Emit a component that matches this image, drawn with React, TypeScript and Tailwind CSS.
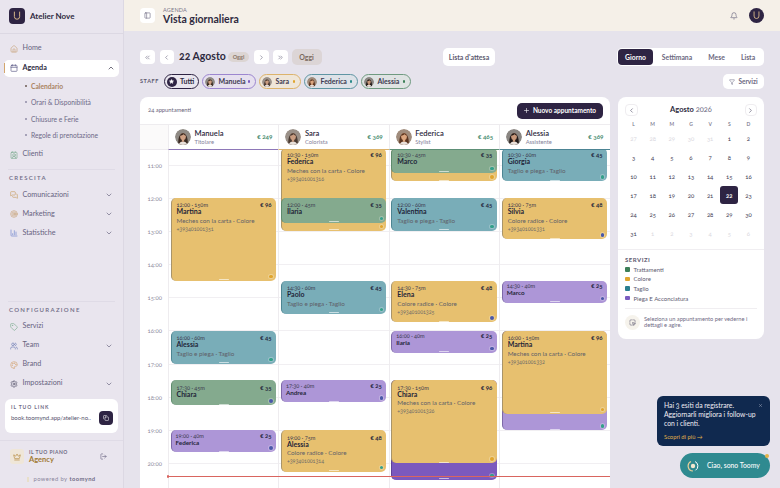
import React from "react";
import { Home, Calendar, ChevronUp, ChevronDown, ContactRound, MessagesSquare, Target, BarChart3, Tag, Users, Palette, Settings, Copy, LogOut, Crown, PanelLeft, Bell, ChevronsLeft, ChevronsRight, ChevronLeft, ChevronRight, Filter, Plus, X, MousePointerSquareDashed, Star } from "lucide-react";

const HOUR = 33.2;
const ORIGIN = 11 * 60; // minute of the day drawn at y=14.5 in the column
const Y0 = 14.5;

const LogoU = ({ cls }: { cls: string }) => (
  <svg viewBox="0 0 16 16" className={cls} fill="none">
    <path d="M5 3.500v5.200a3 3 0 0 0 6 0V3.500" stroke="#d9b98a" strokeWidth="1.100" strokeLinecap="round" />
  </svg>
);

const Face = ({ size, hair = "#2f2320", skin = "#c99a7c", bg = "#8d8580" }: { size: number; hair?: string; skin?: string; bg?: string }) => (
  <svg width={size} height={size} viewBox="0 0 20 20" className="shrink-0 rounded-full">
    <circle cx="10" cy="10" r="10" fill={bg} />
    <path d="M4.200 20c-.6-5 .2-14 5.800-14.600 5.600.6 6.400 9.600 5.800 14.600z" fill={hair} />
    <ellipse cx="10" cy="9.400" rx="3.600" ry="4.500" fill={skin} />
    <path d="M4.500 20c.8-3.400 3-4.500 5.500-4.500s4.700 1.100 5.500 4.500z" fill="#e8e0da" />
    <rect x="8.600" y="12.500" width="2.800" height="3.500" fill={skin} />
    <path d="M6.300 8.600c.6-2.800 2.200-3.400 3.700-3.400s3.100.6 3.700 3.400c-1.500-.6-2.300-1.500-3.100-2-.8 1-2.500 1.700-4.300 2z" fill={hair} />
  </svg>
);

const faces = {
  Manuela: { hair: "#3a2a22", skin: "#cfa083", bg: "#8f8a84" },
  Sara: { hair: "#4a3a32", skin: "#c99c80", bg: "#9a9088" },
  Federica: { hair: "#5b3520", skin: "#dca67f", bg: "#a08c7c" },
  Alessia: { hair: "#221a18", skin: "#c8987a", bg: "#8a8682" },
};

const NavRow = ({ icon, label, color, chev }: { icon: React.ReactNode; label: string; color?: string; chev?: boolean }) => (
  <div className="flex h-[19px] items-center pl-[10px] pr-[10px]">
    <span className={`mr-[4.500px] flex w-[8px] items-center justify-center ${color ?? ""}`}>{icon}</span>
    <span className="flex-1 text-[7.200px] text-[#67637f]">{label}</span>
    {chev && <ChevronDown size={8} className="text-[#67637f]" />}
  </div>
);

const Sub = ({ label, active }: { label: string; active?: boolean }) => (
  <div className="flex h-[16.400px] items-center pl-[25px]">
    <span className={`mr-[4px] h-[2px] w-[2px] rounded-full ${active ? "bg-[#6b5a52]" : "bg-[#8f8ba6]"}`} />
    <span className={`text-[6.700px] ${active ? "font-bold text-[#a98360]" : "text-[#6e6a88]"}`}>{label}</span>
  </div>
);

const Section = ({ label }: { label: string }) => (
  <div className="px-[9px] text-[6px] leading-[6px] font-semibold tracking-[1.300px] text-[#6f6b85]">{label}</div>
);

function Sidebar() {
  return (
    <aside className="flex h-full w-[124px] shrink-0 flex-col border-r border-[#dcd8e3] bg-[#e9e5ee]">
      <div className="flex h-[34px] shrink-0 items-center gap-[5px] border-b border-[#dcd8e3] pl-[9px] pb-[2px]">
        <div className="flex h-[16px] w-[16px] items-center justify-center rounded-[4px] bg-[#2e2443]"><LogoU cls="h-[14px] w-[14px]" /></div>
        <span className="text-[8px] font-bold text-[#2e2a40]">Atelier Nove</span>
      </div>
      <div className="pt-[5px]">
        <NavRow label="Home" color="text-[#c9a47c]" icon={<Home size={8} />} />
        <div className="relative mx-[4px] mt-[1.500px] flex h-[17px] items-center rounded-[5px] bg-white pl-[6px] pr-[4px]">
          <span className="absolute left-0 top-[3.500px] h-[10px] w-[1px] bg-[#d3a66d]" />
          <Calendar size={8} className="mr-[4.500px] text-[#5c5b86]" />
          <span className="flex-1 text-[7.200px] font-bold text-[#2e2a40]">Agenda</span>
          <ChevronUp size={8} className="text-[#2e2a40]" />
        </div>
        <div className="pt-[1.300px]">
          <Sub label="Calendario" active />
          <Sub label="Orari & Disponibilità" />
          <Sub label="Chiusure e Ferie" />
          <Sub label="Regole di prenotazione" />
        </div>
        <div className="pt-[2px]"><NavRow label="Clienti" color="text-[#7fae93]" icon={<ContactRound size={8} />} /></div>
      </div>
      <div className="mx-[8px] mt-[4.500px] border-t border-[#dfdbe6]" />
      <div className="pt-[5px] pb-[5px]"><Section label="CRESCITA" /></div>
      <NavRow label="Comunicazioni" color="text-[#c9a066]" icon={<MessagesSquare size={8} />} chev />
      <NavRow label="Marketing" color="text-[#c9a47c]" icon={<Target size={8} />} chev />
      <NavRow label="Statistiche" color="text-[#6f86cf]" icon={<BarChart3 size={8} />} chev />
      <div className="flex-1" />
      <div className="mx-[8px] border-t border-[#dfdbe6]" />
      <div className="pt-[5px] pb-[4.500px]"><Section label="CONFIGURAZIONE" /></div>
      <NavRow label="Servizi" color="text-[#7fae93]" icon={<Tag size={8} />} />
      <NavRow label="Team" color="text-[#6f7fb5]" icon={<Users size={8} />} chev />
      <NavRow label="Brand" color="text-[#d4a878]" icon={<Palette size={8} />} />
      <NavRow label="Impostazioni" color="text-[#54516a]" icon={<Settings size={8} />} chev />
      <div className="mx-[5px] mt-[5.500px] h-[34px] rounded-[6px] bg-white pl-[6px] pr-[5px] pt-[5px]">
        <div className="text-[5px] leading-[6px] font-bold tracking-[0.900px] text-[#6f6b85]">IL TUO LINK</div>
        <div className="mt-[1px] flex items-center justify-between">
          <span className="text-[6px] whitespace-nowrap text-[#56526d]">book.toomynd.app/atelier-no..</span>
          <span className="flex h-[14px] w-[14px] items-center justify-center rounded-[4px] bg-[#2e2443]"><Copy size={6} className="text-white" /></span>
        </div>
      </div>
      <div className="mt-[7.500px] flex h-[32px] shrink-0 items-center border-t border-[#dfdbe6] pl-[10px] pr-[16px]">
        <span className="mr-[5px] flex h-[15px] w-[14px] items-center justify-center rounded-[3px] bg-[#efe6d8]"><Crown size={8} className="text-[#b58a3e]" /></span>
        <div className="flex-1 leading-none">
          <div className="text-[5px] font-bold tracking-[0.500px] text-[#6f6b85]">IL TUO PIANO</div>
          <div className="mt-[1px] text-[7.500px] font-bold text-[#a17a32]">Agency</div>
        </div>
        <LogOut size={7} className="text-[#67637f]" />
      </div>
      <div className="flex h-[16px] shrink-0 items-center justify-center gap-[2px] pb-[2px] text-[5.800px] tracking-[0.400px] text-[#8a869c]">
        <span className="mr-[2px] h-[5px] w-[2px] bg-[#e8dfc9]" />
        powered by <b className="text-[#6f6b85]">toomynd</b>
      </div>
    </aside>
  );
}

const Square = ({ children }: { children: React.ReactNode }) => (
  <span className="flex h-[14.500px] w-[14.500px] items-center justify-center rounded-[4px] bg-white text-[#6b6880]">{children}</span>
);

const chips = [
  { n: "Manuela", b: "border-[#9c86cf] bg-[#e6e0ef]", d: "bg-[#7a5cc0]", w: "w-[54px]" },
  { n: "Sara", b: "border-[#dcb36c] bg-[#efe6d9]", d: "bg-[#e0a52e]", w: "w-[42px]" },
  { n: "Federica", b: "border-[#5f95a3] bg-[#dde2e8]", d: "bg-[#2a8a8a]", w: "w-[54px]" },
  { n: "Alessia", b: "border-[#6f9a80] bg-[#dfe3e3]", d: "bg-[#3d7f58]", w: "w-[50px]" },
] as const;

function Toolbar() {
  return (
    <div className="shrink-0">
      <div className="flex h-[18px] items-center">
        <div className="flex items-center">
          <Square><ChevronsLeft size={7} /></Square>
          <span className="w-[5px]" />
          <Square><ChevronLeft size={7} /></Square>
          <span className="ml-[5px] w-[46px] whitespace-nowrap text-[10.500px] font-bold text-[#2e2a40]">22 Agosto</span>
          <span className="ml-[3px] flex h-[10px] w-[21px] items-center justify-center rounded-full bg-[#dcd5d3] text-[5.500px] font-bold text-[#8a7666]">Oggi</span>
          <span className="w-[5px]" />
          <Square><ChevronRight size={7} /></Square>
          <span className="w-[4.500px]" />
          <Square><ChevronsRight size={7} /></Square>
          <span className="ml-[4px] flex h-[16px] w-[30px] items-center justify-center rounded-[5px] bg-[#dcd5d6] text-[7px] font-bold text-[#7b6a5e]">Oggi</span>
        </div>
        <span className="ml-[121.500px] flex h-[18px] w-[52px] items-center justify-center rounded-[5px] bg-white text-[7px] font-bold text-[#5d5a70]">Lista d'attesa</span>
        <div className="ml-auto flex h-[18px] w-[147px] items-center rounded-[5px] bg-white pl-[1px] text-[6.800px] font-bold text-[#6b6880]">
          <span className="flex h-[15.500px] w-[35px] items-center justify-center rounded-[4px] bg-[#2e2443] text-white">Giorno</span>
          <span className="w-[48px] text-center">Settimana</span>
          <span className="w-[31px] text-center">Mese</span>
          <span className="w-[32px] text-center">Lista</span>
        </div>
      </div>
      <div className="mt-[8px] flex h-[15px] items-center">
        <span className="mr-[5px] text-[5.500px] font-bold tracking-[0.600px] text-[#5d5a70]">STAFF</span>
        <span className="mr-[3.500px] flex h-[15px] w-[35px] items-center rounded-full border border-[#2e2443] bg-[#e9e6ee] pl-[2px]">
          <span className="mr-[3px] flex h-[10px] w-[10px] items-center justify-center rounded-full bg-[#2e2443]"><Star size={5} className="fill-white text-white" /></span>
          <span className="text-[7px] font-bold text-[#2e2a40]">Tutti</span>
        </span>
        {chips.map((c) => (
          <span key={c.n} className={`mr-[3px] flex h-[15px] items-center rounded-full border pl-[2px] pr-[5px] ${c.b} ${c.w}`}>
            <Face size={10} {...faces[c.n]} />
            <span className="ml-[3px] flex-1 text-[7px] font-bold text-[#3d3950]">{c.n}</span>
            <span className={`h-[2.500px] w-[2.500px] rounded-full ${c.d}`} />
          </span>
        ))}
        <span className="ml-auto flex h-[15px] w-[41px] items-center justify-center gap-[3px] rounded-[5px] bg-white text-[6.500px] font-bold text-[#6b6880]">
          <Filter size={6} />Servizi
        </span>
      </div>
    </div>
  );
}

type Ev = { start: number; dur: number; price: string; name: string; svc?: string; tel?: string; kind: "y" | "t" | "g" | "p" | "d"; dot: string; clock: string };

const k = {
  y: "bg-[#e7c06f] border-[#a8946a]",
  t: "bg-[#79adb8] border-[#4d8592]",
  g: "bg-[#84aa8e] border-[#5d8a6c]",
  p: "bg-[#ad96d7] border-[#7d68a8]",
  d: "bg-[#7b59bd] border-[#5e4396]",
};

const A = "bg-[#e0a52e]", T = "bg-[#33a08a]", B = "bg-[#4a58a8]";
const ev = (clock: string, dur: number, price: string, name: string, kind: Ev["kind"], dot: string, svc?: string, tel?: string): Ev => {
  const [h, m] = clock.split(":").map(Number);
  return { start: h * 60 + m, dur, price, name, svc, tel, kind, dot, clock };
};
const MC = "Meches con la carta · Colore", TP = "Taglio e piega · Taglio", CR = "Colore radice · Colore";

const cols: { name: string; role: string; total: string; line: string; ev: Ev[] }[] = [
  { name: "Manuela", role: "Titolare", total: "€ 249", line: "border-[#8e78b8]", ev: [
    ev("12:00", 150, "€ 96", "Martina", "y", A, MC, "+393401001351"),
    ev("16:00", 60, "€ 45", "Alessia", "t", T, TP),
    ev("17:30", 45, "€ 35", "Chiara", "g", B),
    ev("19:00", 40, "€ 25", "Federica", "p", B),
  ] },
  { name: "Sara", role: "Colorista", total: "€ 369", line: "border-[#dcb36c]", ev: [
    ev("10:30", 150, "€ 96", "Federica", "y", A, MC, "+393401001316"),
    ev("12:00", 45, "€ 35", "Ilaria", "g", T),
    ev("14:30", 60, "€ 45", "Paolo", "t", T, TP),
    ev("17:30", 40, "€ 25", "Andrea", "p", B),
    ev("19:00", 75, "€ 48", "Alessia", "y", T, CR, "+393401001314"),
  ] },
  { name: "Federica", role: "Stylist", total: "€ 465", line: "border-[#5d8f76]", ev: [
    ev("10:30", 60, "", "", "y", A),
    ev("10:30", 45, "€ 35", "Marco", "g", T),
    ev("12:00", 60, "€ 45", "Valentina", "t", T, TP),
    ev("14:30", 75, "€ 48", "Elena", "y", B, CR, "+393401001325"),
    ev("16:00", 40, "€ 25", "Ilaria", "p", B),
    ev("17:30", 180, "", "", "d", T),
    ev("17:30", 150, "€ 96", "Chiara", "y", A, MC, "+393401001326"),
  ] },
  { name: "Alessia", role: "Assistente", total: "€ 369", line: "border-[#4c8494]", ev: [
    ev("10:30", 60, "€ 45", "Giorgia", "t", T, TP),
    ev("12:00", 75, "€ 48", "Silvia", "y", B, CR, "+393401001331"),
    ev("14:30", 40, "€ 25", "Marco", "p", B),
    ev("16:00", 180, "", "", "p", T),
    ev("16:00", 150, "€ 96", "Martina", "y", A, MC, "+393401001332"),
  ] },
];

function Event({ e }: { e: Ev }) {
  const top = Y0 + ((e.start - ORIGIN) * HOUR) / 60;
  const height = (e.dur * HOUR) / 60;
  const short = e.dur <= 40;
  return (
    <div
      className={`absolute left-[1.500px] right-[2.500px] overflow-hidden rounded-[5px] border-l pr-[4.500px] ${k[e.kind]} ${short ? "pl-[4px] pt-[1.500px]" : "pl-[5px] pt-[3.500px]"}`}
      style={{ top, height }}
    >
      {e.name && (
        <>
          <div className="flex items-center justify-between text-[5.600px] leading-[7px] text-[#3c3a4e]">
            <span>{e.clock} · {e.dur}m</span>
            <b className="text-[6px] text-[#22233a]">{e.price}</b>
          </div>
          <div className={`font-bold leading-[7.500px] text-[#1f2538] ${short ? "text-[6.300px]" : "text-[7px]"}`}>{e.name}</div>
          {e.svc && <div className="mt-[1px] text-[6.300px] leading-[8px] text-[#5f6068]">{e.svc}</div>}
          {e.tel && <div className="text-[5.300px] leading-[8px] text-[#6d6a68]">{e.tel}</div>}
        </>
      )}
      <span className={`absolute bottom-[2.500px] right-[3px] h-[3.500px] w-[3.500px] rounded-full ${e.dot} ring-1 ring-white/25`} />
      <span className="absolute bottom-[0.500px] left-1/2 h-[1px] w-[10px] -translate-x-1/2 rounded-full bg-white/60" />
    </div>
  );
}

const hours = [10, 11, 12, 13, 14, 15, 16, 17, 18, 19, 20, 21];

function Schedule() {
  return (
    <section className="flex min-w-0 flex-1 flex-col overflow-hidden rounded-t-[8px] bg-white">
      <div className="flex h-[28px] shrink-0 items-center justify-between border-b border-[#eeecef] pl-[8px] pr-[7px]">
        <span className="text-[5.800px] text-[#66637a]">24 appuntamenti</span>
        <span className="flex h-[16px] w-[86px] items-center justify-center gap-[3px] rounded-[5px] bg-[#2e2443] text-[6.500px] font-bold text-white">
          <Plus size={7} />Nuovo appuntamento
        </span>
      </div>
      <div className="grid h-[25px] shrink-0 grid-cols-[28px_repeat(4,1fr)]">
        <div className="border-b border-[#eeecef] bg-[#fbfafa]" />
        {cols.map((c) => (
          <div key={c.name} className={`flex items-center border-b border-l border-l-[#eeecef] pl-[6px] pr-[6px] ${c.line}`}>
            <Face size={16} {...faces[c.name as keyof typeof faces]} />
            <div className="ml-[3.500px] flex-1 pt-[1px] leading-none">
              <div className="text-[7.600px] font-semibold text-[#2e2a40]">{c.name}</div>
              <div className="mt-[1px] text-[5.800px] text-[#85829a]">{c.role}</div>
            </div>
            <span className="text-[6.300px] font-bold text-[#3f8a6c]">{c.total}</span>
          </div>
        ))}
      </div>
      <div className="relative grid min-h-0 flex-1 grid-cols-[28px_repeat(4,1fr)] overflow-hidden">
        <div className="-mt-[18.700px]">
          {hours.map((h) => (
            <div key={h} className="h-[33.200px]">
              {h > 10 && h < 21 && (
                <span className="block -translate-y-1/2 pr-[6px] text-right text-[6px] text-[#908da0]">{h}:00</span>
              )}
            </div>
          ))}
        </div>
        {cols.map((c) => (
          <div key={c.name} className="relative overflow-hidden border-l border-[#eeecef]">
            <div className="-mt-[18.700px]">
              {hours.map((h) => <div key={h} className="h-[33.200px] border-t border-[#f1eff2]" />)}
            </div>
            {c.ev.map((e, i) => <Event key={i} e={e} />)}
          </div>
        ))}
        <div className="absolute left-[27px] right-0 top-[326px] h-[1px] bg-[#d9655f]">
          <span className="absolute -left-[0.500px] -top-[1px] h-[3px] w-[2px] rounded-full bg-[#d9655f]" />
        </div>
      </div>
    </section>
  );
}

const days: [number, boolean][] = [
  ...[27, 28, 29, 30, 31].map((d) => [d, true] as [number, boolean]),
  ...Array.from({ length: 31 }, (_, i) => [i + 1, false] as [number, boolean]),
  ...[1, 2, 3, 4, 5, 6].map((d) => [d, true] as [number, boolean]),
];

const legend = [["bg-[#3d7f58]", "Trattamenti"], ["bg-[#e0a52e]", "Colore"], ["bg-[#2a7f90]", "Taglio"], ["bg-[#7a5cc0]", "Piega E Acconciatura"]];

function Side() {
  return (
    <section className="h-[242px] w-[146px] shrink-0 rounded-[8px] bg-white px-[6px] pt-[6px]">
      <div className="flex h-[14px] items-center justify-between px-[1px]">
        <span className="flex h-[12.500px] w-[12.500px] items-center justify-center rounded-[4px] border border-[#efedf0] text-[#4a4660]"><ChevronLeft size={7} /></span>
        <span className="text-[7.500px] font-bold text-[#2e2a40]">Agosto <span className="font-normal text-[#6f6b85]">2026</span></span>
        <span className="flex h-[12.500px] w-[12.500px] items-center justify-center rounded-[4px] border border-[#efedf0] text-[#4a4660]"><ChevronRight size={7} /></span>
      </div>
      <div className="mt-[1.500px] grid grid-cols-7 text-center text-[5px] leading-[10px] font-semibold text-[#77748a]">
        {["L", "M", "M", "G", "V", "S", "D"].map((d, i) => <span key={i}>{d}</span>)}
      </div>
      <div className="grid grid-cols-7 text-[6px]">
        {days.map(([d, off], i) => (
          <span key={i} className="flex h-[19px] items-center justify-center">
            <span className={`flex h-[18px] w-[18px] items-center justify-center rounded-[3px] ${d === 22 && !off ? "bg-[#2e2443] font-bold text-white" : off ? "text-[#d9d7de]" : "text-[#3d3950]"}`}>{d}</span>
          </span>
        ))}
      </div>
      <div className="-mx-[6px] mt-[6px] border-t border-[#f0eef1] px-[7px] pt-[6px]">
        <div className="text-[6px] leading-[8px] font-bold tracking-[0.500px] text-[#5d5a70]">SERVIZI</div>
        <div className="mt-[1px] flex flex-col">
          {legend.map(([c, l]) => (
            <div key={l} className="flex h-[9.600px] items-center gap-[4px] text-[6px] text-[#5d5a70]">
              <span className={`h-[4.500px] w-[4.500px] rounded-[1px] ${c}`} />{l}
            </div>
          ))}
        </div>
        <div className="mt-[5px] flex items-center gap-[4px] border-t border-[#f0eef1] pt-[6px]">
          <span className="flex h-[15px] w-[15px] shrink-0 items-center justify-center rounded-full bg-[#f6f3ec] text-[#4a4660]"><MousePointerSquareDashed size={7} /></span>
          <span className="text-[5.700px] leading-[6.800px] whitespace-nowrap text-[#6f6b85]">Seleziona un appuntamento per vederne i<br />dettagli e agire.</span>
        </div>
      </div>
    </section>
  );
}

export default function App() {
  return (
    <div className="relative flex h-screen w-full overflow-hidden bg-[#e6e3ec] font-['Lato','Liberation_Sans',sans-serif] oldstyle-nums">
      <Sidebar />
      <main className="flex min-w-0 flex-1 flex-col">
        <header className="flex h-[31px] shrink-0 items-center bg-[#f5f0e8] pl-[16px] pr-[16px]">
          <span className="flex h-[15px] w-[15px] items-center justify-center rounded-[4px] bg-white text-[#6b6880]"><PanelLeft size={7} /></span>
          <div className="ml-[8px] pt-[1px] leading-none">
            <div className="text-[5.500px] tracking-[0.200px] text-[#7a7688]">AGENDA</div>
            <div className="mt-[1px] text-[10.500px] font-bold text-[#2e2a40]">Vista giornaliera</div>
          </div>
          <Bell size={8} className="ml-auto mr-[11px] text-[#6b6880]" />
          <span className="flex h-[15px] w-[15px] items-center justify-center rounded-full bg-[#2e2443]"><LogoU cls="h-[13px] w-[13px]" /></span>
        </header>
        <div className="flex min-h-0 flex-1 flex-col pl-[16px] pr-[16px] pt-[17px]">
          <Toolbar />
          <div className="mt-[8px] flex min-h-0 flex-1 items-start gap-[8.500px]">
            <div className="flex h-full min-w-0 flex-1"><Schedule /></div>
            <Side />
          </div>
        </div>
      </main>
      <div className="absolute right-[10px] top-[396px] flex w-[113px] flex-col items-end gap-[7px]">
        <div className="relative h-[50px] w-full rounded-[6px] bg-[#10294f] pl-[7px] pr-[8px] pt-[5px] text-[6.800px] leading-[9px] whitespace-nowrap text-[#f0eef4]">
          Hai 3 esiti da registrare.<br />Aggiornarli migliora i follow-up<br />con i clienti.
          <div className="mt-[3.500px] text-[5.800px] text-[#e0b24a]">Scopri di più →</div>
          <X size={5} className="absolute right-[7px] top-[7px] text-[#aab2c4]" />
        </div>
        <div className="relative flex h-[25px] w-[90px] items-center rounded-full bg-[#2f8a90] pl-[7px] text-[6.800px] font-medium text-white">
          <svg viewBox="0 0 12 12" className="mr-[8px] h-[12px] w-[12px]" fill="none">
            <path d="M4 1.500A5 5 0 0 0 6 11" stroke="#e8cf9a" strokeWidth="1.200" />
            <path d="M8 1.500A5 5 0 0 1 8.500 10.300" stroke="#ffffff" strokeWidth="1" />
            <circle cx="6" cy="6" r="2.200" fill="#f3e8cf" />
          </svg>
          Ciao, sono Toomy
          <span className="absolute right-[1px] top-[1px] h-[4px] w-[4px] rounded-full bg-[#e0b24a]" />
        </div>
      </div>
    </div>
  );
}
